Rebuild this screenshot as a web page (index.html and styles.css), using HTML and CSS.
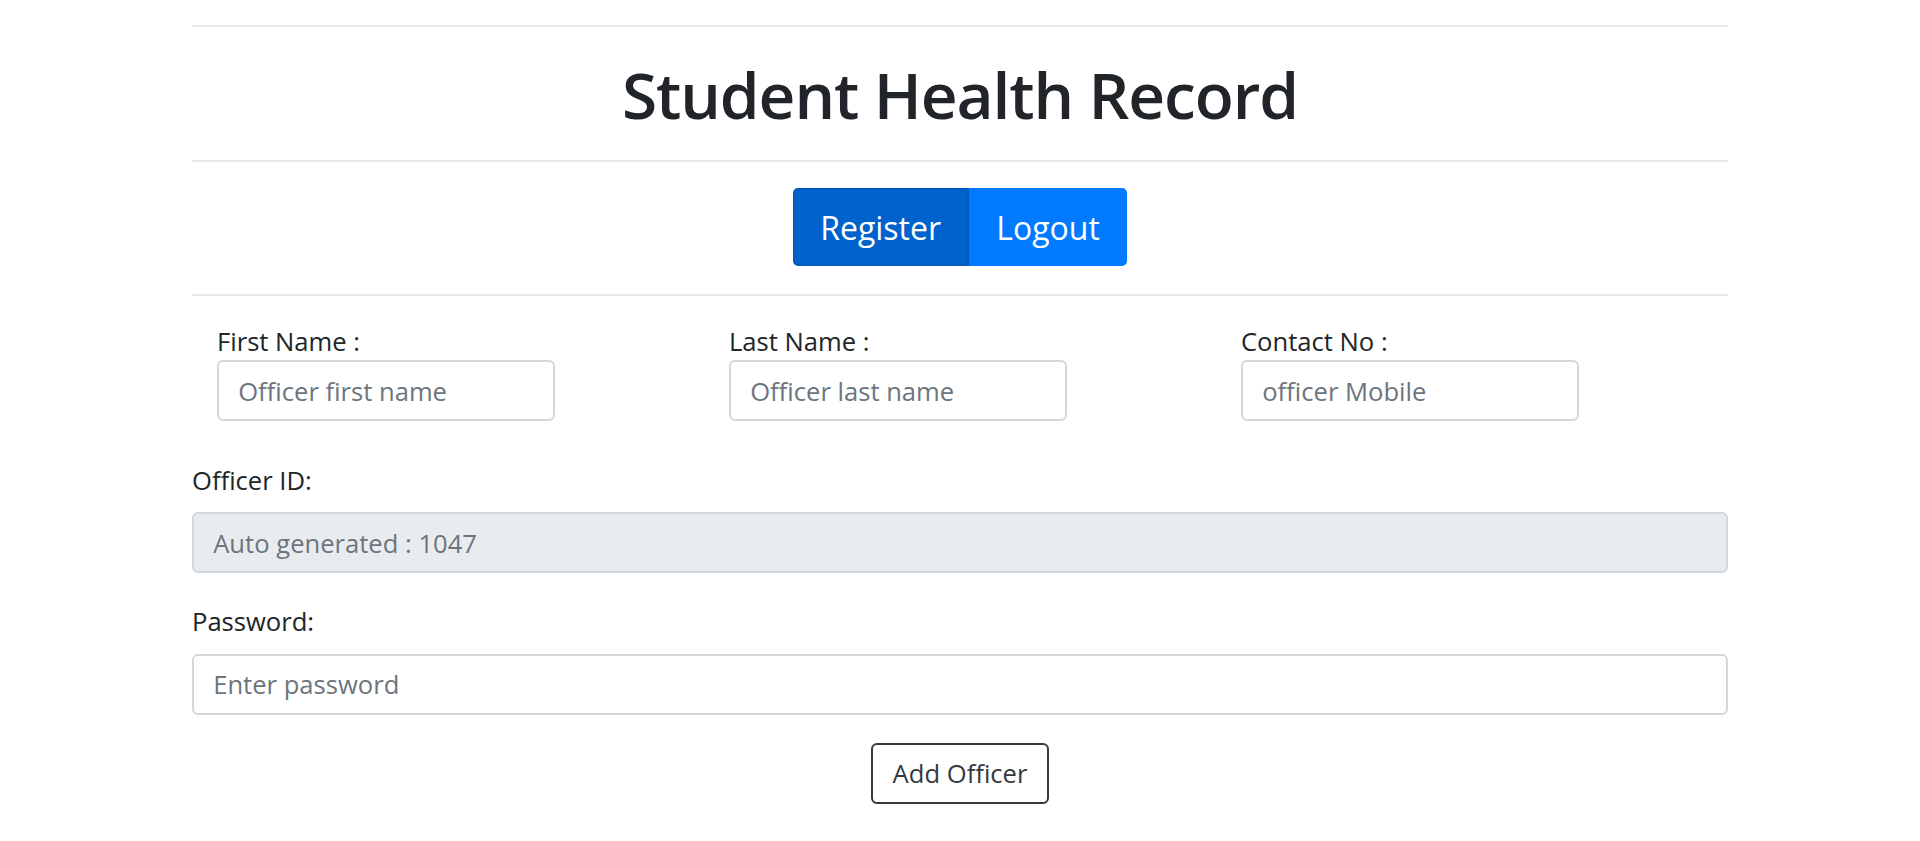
FILE: index.html
```html
<!DOCTYPE html>
<html lang="en">
<head>
<meta charset="utf-8">
<title>Student Health Record</title>
<link rel="stylesheet" href="styles.css">
</head>
<body>
<div class="page">
  <hr class="rule rule-top">
  <h1 class="title">Student Health Record</h1>
  <hr class="rule">
  <nav class="nav">
    <div class="btn-group">
      <button class="btn btn-active" type="button">Register</button>
      <button class="btn btn-primary" type="button">Logout</button>
    </div>
  </nav>
  <hr class="rule">
  <form class="form">
    <div class="name-row">
      <div class="col">
        <label class="label-tight" for="fn">First Name :</label>
        <input class="field field-short" id="fn" type="text" placeholder="Officer first name">
      </div>
      <div class="col">
        <label class="label-tight" for="ln">Last Name :</label>
        <input class="field field-short" id="ln" type="text" placeholder="Officer last name">
      </div>
      <div class="col">
        <label class="label-tight" for="cn">Contact No :</label>
        <input class="field field-short" id="cn" type="text" placeholder="officer Mobile">
      </div>
    </div>
    <div class="group group-id">
      <label class="label" for="oid">Officer ID:</label>
      <input class="field field-disabled" id="oid" type="text" placeholder="Auto generated : 1047" disabled>
    </div>
    <div class="group group-pass">
      <label class="label" for="pw">Password:</label>
      <input class="field" id="pw" type="password" placeholder="Enter password">
    </div>
    <div class="actions">
      <button class="btn-outline" type="button">Add Officer</button>
    </div>
  </form>
</div>
</body>
</html>
```

FILE: styles.css
```css
* {
  box-sizing: border-box;
}

html, body {
  margin: 0;
  padding: 0;
  background: #ffffff;
}

body {
  font-family: "Open Sans", "Noto Sans", "Liberation Sans", sans-serif;
  font-size: 25.6px;
  line-height: 38.4px;
  color: #212529;
}

.page {
  width: 80%;
  margin: 0 auto;
}

.rule {
  margin: 0;
  border: 0;
  border-top: 2px solid rgba(0, 0, 0, 0.09);
  height: 0;
}

.rule-top {
  margin-top: 25px;
}

.title {
  margin: 0;
  padding: 30px 0 26px;
  font-size: 64px;
  line-height: 76.8px;
  font-weight: 600;
  letter-spacing: -1.1px;
  text-align: center;
  color: #212529;
}

.nav {
  display: flex;
  justify-content: center;
  padding: 26px 0 28px;
}

.btn-group {
  display: flex;
}

.btn {
  font-family: inherit;
  font-size: 32px;
  line-height: 48px;
  padding: 14px 25.6px 12px;
  border: 2px solid #007bff;
  background: #007bff;
  color: #ffffff;
  margin: 0;
  cursor: pointer;
}

.btn-active {
  background: #0062cc;
  border-color: #005cbf;
  border-radius: 5px 0 0 5px;
}

.btn-primary {
  border-radius: 0 5px 5px 0;
}

.form {
  padding-top: 26px;
}

.name-row {
  display: grid;
  grid-template-columns: repeat(3, 1fr);
}

.col {
  display: flex;
  flex-direction: column;
  align-items: flex-start;
  padding-left: 25px;
}

.label-tight {
  display: block;
  margin: 0;
  padding-top: 2px;
  line-height: 36.4px;
}

.label {
  display: block;
  margin: 0 0 12.8px;
  padding-top: 2px;
  line-height: 36.4px;
}

.field {
  display: block;
  width: 100%;
  height: 61px;
  padding: 1px 19.2px 0;
  font-family: inherit;
  font-size: 25.6px;
  color: #495057;
  background: #ffffff;
  border: 2px solid #d3d8dd;
  border-radius: 6px;
  outline: none;
}

.field::placeholder {
  color: #6c757d;
  opacity: 1;
}

.field-short {
  width: 338px;
}

.field-disabled {
  background: #e9ecef;
}

.group-id {
  margin-top: 40px;
}

.group-pass {
  margin-top: 29px;
}

.actions {
  display: flex;
  justify-content: center;
  padding-top: 28px;
}

.btn-outline {
  font-family: inherit;
  font-size: 25.6px;
  line-height: 38.4px;
  padding: 10px 19.2px 9px;
  color: #343a40;
  background: #ffffff;
  border: 2px solid #343a40;
  border-radius: 6px;
  cursor: pointer;
}
```
